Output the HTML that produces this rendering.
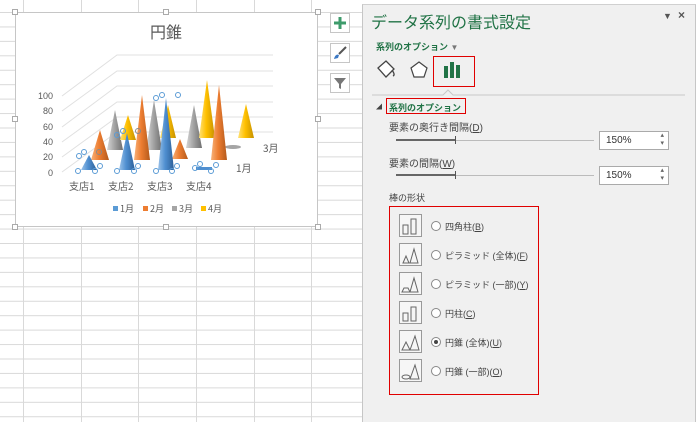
<!DOCTYPE html>
<html><head><meta charset="utf-8"><style>
*{margin:0;padding:0;box-sizing:border-box}
body{width:700px;height:422px;overflow:hidden;background:#fff;font-family:"Liberation Sans","Noto Sans CJK JP",sans-serif;position:relative}
.abs{position:absolute}
.grid{left:0;top:0;width:362px;height:422px;
background-image:linear-gradient(to bottom,#d9d9d9 1px,transparent 1px);background-size:100% 14.45px;background-position:0 12px}
.vl{position:absolute;top:0;width:1px;height:422px;background:#d9d9d9}
.chart{left:15px;top:12px;width:303px;height:215px;background:#fff;border:1px solid #c6c6c6}
.h{position:absolute;width:6px;height:6px;border:1px solid #aaa;background:#fff}
.btn{position:absolute;left:330px;width:20px;height:20px;border:1px solid #c6c6c6;background:#fff}
.panel{left:362px;top:4px;width:334px;height:418px;background:#f0f0f0;border-left:1px solid #c6c6c6;border-right:1px solid #c6c6c6;border-top:1px solid #d0d0d0}
.t{position:absolute;font-size:10px;color:#444;white-space:nowrap}
.s{font-size:9px}
.red{position:absolute;border:1.5px solid #e00000}
.ico{position:absolute;left:399px;width:23px;height:23px;border:1px solid #999;background:#f6f6f6}
.rad{position:absolute;left:431px;width:10px;height:10px;border:1px solid #888;border-radius:50%;background:#fff}
.box{position:absolute;left:599px;width:70px;height:19px;background:#fff;border:1px solid #aaa;font-size:10px;color:#333;padding:3px 0 0 6px}
.box:after{content:"▴\A▾";white-space:pre;position:absolute;right:4px;top:0;font-size:7px;line-height:8px;color:#666}
</style></head><body>
<div class="abs grid"></div>
<div class="vl" style="left:23px"></div><div class="vl" style="left:81px"></div><div class="vl" style="left:138px"></div><div class="vl" style="left:196px"></div><div class="vl" style="left:254px"></div><div class="vl" style="left:311px"></div>
<div class="abs" style="left:362px;top:0;width:338px;height:4px;background:#fff"></div>

<div class="abs chart"></div>
<div class="h" style="left:12px;top:9px"></div><div class="h" style="left:163px;top:9px"></div><div class="h" style="left:315px;top:9px"></div>
<div class="h" style="left:12px;top:116px"></div><div class="h" style="left:315px;top:116px"></div>
<div class="h" style="left:12px;top:224px"></div><div class="h" style="left:163px;top:224px"></div><div class="h" style="left:315px;top:224px"></div>

<svg class="abs" style="left:0;top:0" width="362" height="240">
<defs>
<linearGradient id="gb" x1="0" x2="1"><stop offset="0" stop-color="#9cc3ea"/><stop offset=".45" stop-color="#4f8fd0"/><stop offset="1" stop-color="#2c5f98"/></linearGradient>
<linearGradient id="go" x1="0" x2="1"><stop offset="0" stop-color="#f7b27a"/><stop offset=".45" stop-color="#ed7d31"/><stop offset="1" stop-color="#b45a1c"/></linearGradient>
<linearGradient id="gg" x1="0" x2="1"><stop offset="0" stop-color="#d6d6d6"/><stop offset=".45" stop-color="#a5a5a5"/><stop offset="1" stop-color="#6e6e6e"/></linearGradient>
<linearGradient id="gy" x1="0" x2="1"><stop offset="0" stop-color="#ffe27a"/><stop offset=".45" stop-color="#ffc000"/><stop offset="1" stop-color="#c69100"/></linearGradient>
</defs>
<text x="166" y="38" font-size="16" fill="#595959" text-anchor="middle" font-family="Noto Sans CJK JP">円錐</text>
<g stroke="#e0e0e0" stroke-width="1" fill="none">
<path d="M62 172L117 132H273M62 157L117 117H273M62 142L117 102H273M62 127L117 86H273M62 111L117 71H273M62 96L117 55H273"/>
</g>
<g font-size="9" fill="#595959" text-anchor="end">
<text x="53" y="99">100</text><text x="53" y="114">80</text><text x="53" y="130">60</text><text x="53" y="145">40</text><text x="53" y="160">20</text><text x="53" y="176">0</text>
</g>
<polygon points="115,110 107,150 123,150" fill="url(#gg)"/>
<polygon points="128,115 120,140 136,140" fill="url(#gy)"/>
<polygon points="154,100 146,150 162,150" fill="url(#gg)"/>
<polygon points="168,105 160,138 176,138" fill="url(#gy)"/>
<polygon points="194,105 186,148 202,148" fill="url(#gg)"/>
<polygon points="207,80 199,138 215,138" fill="url(#gy)"/>
<polygon points="246,104 238,138 254,138" fill="url(#gy)"/>
<ellipse cx="233" cy="147" rx="8" ry="2" fill="#a5a5a5"/>
<polygon points="100,130 91,160 109,160" fill="url(#go)"/>
<polygon points="142,95 134,160 150,160" fill="url(#go)"/>
<polygon points="180,139 172,159 188,159" fill="url(#go)"/>
<polygon points="219,85 211,160 227,160" fill="url(#go)"/>
<polygon points="89,155 81,170 97,170" fill="url(#gb)"/>
<polygon points="127,133 119,170 135,170" fill="url(#gb)"/>
<polygon points="166,98 158,170 174,170" fill="url(#gb)"/>
<rect x="196" y="167" width="16" height="3" fill="#4f8fd0"/>
<g fill="none" stroke="#5b9bd5" stroke-width="1">
<circle cx="79" cy="156" r="2.5"/><circle cx="84" cy="152" r="2.5"/><circle cx="78" cy="171" r="2.5"/><circle cx="95" cy="171" r="2.5"/><circle cx="100" cy="166" r="2.5"/>
<circle cx="117" cy="135" r="2.5"/><circle cx="123" cy="131" r="2.5"/><circle cx="117" cy="171" r="2.5"/><circle cx="134" cy="171" r="2.5"/><circle cx="138" cy="166" r="2.5"/>
<circle cx="156" cy="98" r="2.5"/><circle cx="162" cy="95" r="2.5"/><circle cx="178" cy="95" r="2.5"/><circle cx="156" cy="171" r="2.5"/><circle cx="172" cy="171" r="2.5"/><circle cx="177" cy="166" r="2.5"/>
<circle cx="195" cy="168" r="2.5"/><circle cx="200" cy="164" r="2.5"/><circle cx="211" cy="171" r="2.5"/><circle cx="216" cy="165" r="2.5"/>
</g>
<g fill="none" stroke="#8a8a8a"><circle cx="99" cy="152" r="2.5"/><circle cx="138" cy="131" r="2.5"/></g>
<g font-size="10" fill="#595959" font-family="Noto Sans CJK JP">
<text x="69" y="190">支店1</text><text x="108" y="190">支店2</text><text x="147" y="190">支店3</text><text x="186" y="190">支店4</text>
<text x="263" y="152">3月</text><text x="236" y="172">1月</text>
</g>
<g font-size="9" fill="#595959" font-family="Noto Sans CJK JP">
<rect x="113" y="206" width="5" height="5" fill="#5b9bd5"/><text x="120" y="212">1月</text>
<rect x="143" y="206" width="5" height="5" fill="#ed7d31"/><text x="150" y="212">2月</text>
<rect x="172" y="206" width="5" height="5" fill="#a5a5a5"/><text x="179" y="212">3月</text>
<rect x="201" y="206" width="5" height="5" fill="#ffc000"/><text x="208" y="212">4月</text>
</g>
</svg>

<div class="btn" style="top:13px"><svg width="18" height="18"><path d="M9 3v12M3 9h12" stroke="#3d9b6b" stroke-width="3"/></svg></div>
<div class="btn" style="top:43px"><svg width="18" height="18"><path d="M15 3L8 10" stroke="#555" stroke-width="2"/><path d="M3 15c1-4 3-5 5-4l-1 3z" fill="#3b78c4"/></svg></div>
<div class="btn" style="top:73px"><svg width="18" height="18"><path d="M3 4h12l-5 6v5l-2-1v-4z" fill="#777"/></svg></div>

<div class="abs panel"></div>
<div class="t" style="left:371px;top:9px;font-size:16px;color:#217346">データ系列の書式設定</div>
<div class="t" style="left:663px;top:11px;font-size:9px;color:#555">▼</div>
<div class="t" style="left:678px;top:8px;font-size:12px;color:#555;font-weight:bold">×</div>
<div class="t" style="left:376px;top:40px;font-size:9px;color:#217346;font-weight:bold">系列のオプション <span style="color:#777;font-size:8px">▼</span></div>
<svg class="abs" style="left:372px;top:58px" width="320" height="40">
<path d="M6 10l8-7 8 8-8 8z" fill="#fff" stroke="#444" stroke-width="1.3"/><path d="M20 12c2 3 3 5 1 6" fill="none" stroke="#444" stroke-width="1.3"/>
<path d="M47 4l8 6-3 9h-10l-3-9z" fill="#fff" stroke="#444" stroke-width="1.2"/>
<rect x="72" y="8" width="4" height="12" fill="#217346"/><rect x="78" y="4" width="4" height="16" fill="#217346"/><rect x="84" y="7" width="4" height="13" fill="#217346"/>
<path d="M0 37H71l5-5 5 5H313" fill="none" stroke="#c8c8c8"/>
</svg>
<div class="red" style="left:433px;top:56px;width:42px;height:31px"></div>
<div class="t" style="left:376px;top:102px;font-size:6px;color:#444">◢</div>
<div class="t" style="left:389px;top:101px;font-size:9px;color:#217346;font-weight:bold">系列のオプション</div>
<div class="red" style="left:386px;top:98px;width:80px;height:16px"></div>
<div class="t" style="left:389px;top:119px">要素の奥行き間隔(<u>D</u>)</div>
<div class="abs" style="left:396px;top:140px;width:198px;height:1px;background:#bbb"></div>
<div class="abs" style="left:396px;top:139px;width:60px;height:2px;background:#666"></div>
<div class="abs" style="left:455px;top:136px;width:1px;height:8px;background:#555"></div>
<div class="box" style="top:131px">150%</div>
<div class="t" style="left:389px;top:155px">要素の間隔(<u>W</u>)</div>
<div class="abs" style="left:396px;top:175px;width:198px;height:1px;background:#bbb"></div>
<div class="abs" style="left:396px;top:174px;width:60px;height:2px;background:#666"></div>
<div class="abs" style="left:455px;top:171px;width:1px;height:8px;background:#555"></div>
<div class="box" style="top:166px">150%</div>
<div class="t s" style="left:389px;top:191px">棒の形状</div>
<div class="red" style="left:389px;top:206px;width:150px;height:189px"></div>

<div class="ico" style="top:214px"><svg width="21" height="21"><path d="M3 10h5v9H3zM11 4h5v15h-5z" fill="none" stroke="#666"/></svg></div>
<div class="ico" style="top:243px"><svg width="21" height="21"><path d="M3 19l3-7 3 7zM10 19l4-14 4 14z" fill="none" stroke="#666"/></svg></div>
<div class="ico" style="top:272px"><svg width="21" height="21"><path d="M2 19l2-4h4l2 4zM10 19l4-14 4 14z" fill="none" stroke="#666"/></svg></div>
<div class="ico" style="top:301px"><svg width="21" height="21"><path d="M3 11h5v8H3zM11 5h5v14h-5z" fill="none" stroke="#666"/></svg></div>
<div class="ico" style="top:330px"><svg width="21" height="21"><path d="M2 19l4-8 4 8zM10 19l5-14 4 14z" fill="none" stroke="#666"/></svg></div>
<div class="ico" style="top:359px"><svg width="21" height="21"><ellipse cx="6" cy="17" rx="4" ry="2" fill="none" stroke="#666"/><path d="M10 19l5-14 4 14z" fill="none" stroke="#666"/></svg></div>
<div class="rad" style="top:221px"></div><div class="t s" style="left:445px;top:220px">四角柱(<u>B</u>)</div>
<div class="rad" style="top:250px"></div><div class="t s" style="left:445px;top:249px">ピラミッド (全体)(<u>F</u>)</div>
<div class="rad" style="top:279px"></div><div class="t s" style="left:445px;top:278px">ピラミッド (一部)(<u>Y</u>)</div>
<div class="rad" style="top:308px"></div><div class="t s" style="left:445px;top:307px">円柱(<u>C</u>)</div>
<div class="rad" style="top:337px"><div style="width:4px;height:4px;border-radius:50%;background:#444;margin:2px"></div></div><div class="t s" style="left:445px;top:336px">円錐 (全体)(<u>U</u>)</div>
<div class="rad" style="top:366px"></div><div class="t s" style="left:445px;top:365px">円錐 (一部)(<u>O</u>)</div>
</body></html>
